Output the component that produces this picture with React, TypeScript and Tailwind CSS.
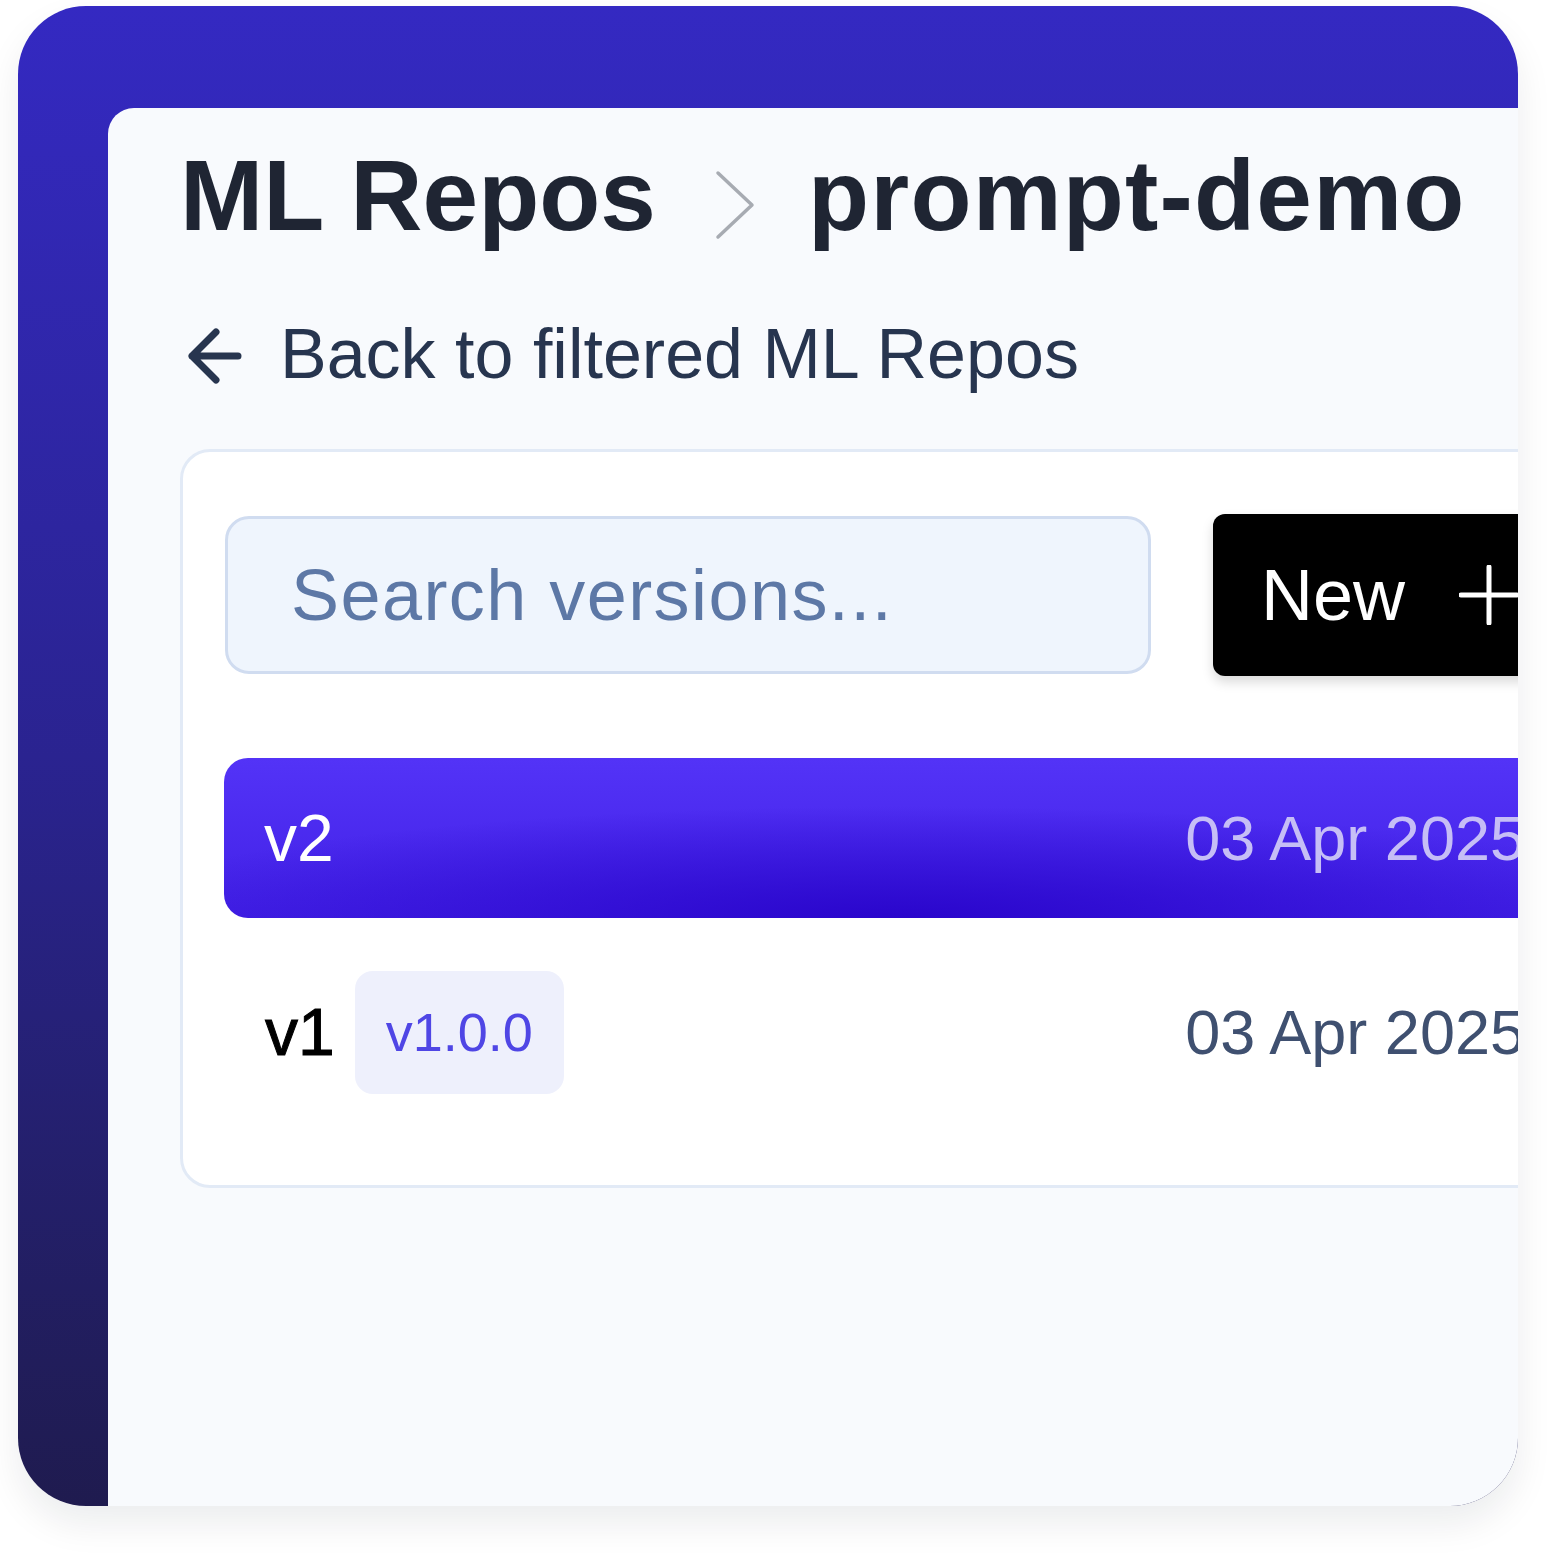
import React from 'react';

const VersionsPanel: React.FC = () => {
    return (
        <div className="min-h-screen bg-white font-['Liberation_Sans',Arial,sans-serif]">
            <div className="pl-[18px] pt-[6px]">
                <div className="w-[1500px] h-[1500px] rounded-[68px] overflow-hidden bg-linear-to-b from-[#3429c2] via-[#2a2390] to-[#1f1b4f] shadow-[0_18px_36px_rgba(15,23,42,0.08)] pl-[90px] pt-[102px]">
                    <div className="h-full w-[1600px] rounded-tl-[26px] bg-[#f8fafd] pl-[72px] pt-[37px]">
                        {/* breadcrumb */}
                        <div className="flex items-start">
                            <h1 className="text-[100px] leading-none font-bold text-[#1f2533] whitespace-nowrap">ML Repos</h1>
                            <svg width="52" height="80" viewBox="0 0 52 80" className="ml-[52px] mt-[20px] shrink-0">
                                <polyline points="10,8 44,40 10,72" fill="none" stroke="#a7abb2" strokeWidth="3.5" strokeLinecap="round" strokeLinejoin="round" />
                            </svg>
                            <h1 className="ml-[48px] text-[100px] leading-none font-bold tracking-[0.012em] text-[#1f2533] whitespace-nowrap">prompt-demo</h1>
                        </div>

                        <div className="mt-[74px] flex items-start">
                            <svg width="68" height="66" viewBox="0 0 68 66" className="mt-[4px] shrink-0">
                                <path d="M36 9 L12 33 L36 57 M12 33 H58" fill="none" stroke="#27354f" strokeWidth="7" strokeLinecap="round" strokeLinejoin="round" />
                            </svg>
                            <span className="ml-[32px] text-[70px] leading-none text-[#27354f] whitespace-nowrap">Back to filtered ML Repos</span>
                        </div>

                        {/* versions card */}
                        <div className="mt-[60px] w-[1440px] rounded-[30px] border-[3px] border-[#e2eaf6] bg-white pt-[62px] px-[42px] pb-[73px]">
                            <div className="flex items-center">
                                <input
                                    placeholder="Search versions..."
                                    className="w-[926px] h-[158px] shrink-0 rounded-[24px] border-[3px] border-[#d0dcf0] bg-[#eff5fd] pl-[63px] text-[72px] tracking-[0.02em] text-[#27354f] placeholder:text-[#5d78a6] outline-none"
                                />
                                <button className="ml-[62px] h-[162px] flex-1 flex items-center rounded-[12px] bg-black pl-[48px] text-white shadow-[0_6px_12px_rgba(0,0,0,0.15)]">
                                    <span className="text-[72px] leading-none">New</span>
                                    <svg width="60" height="60" viewBox="0 0 60 60" className="ml-[54px] shrink-0">
                                        <path d="M2 30 H58 M30 2 V58" stroke="white" strokeWidth="5" strokeLinecap="round" />
                                    </svg>
                                </button>
                            </div>

                            <div className="mt-[82px] -ml-[1px] h-[160px] flex items-center justify-between rounded-[24px] pl-[40px] pr-[50px] bg-[radial-gradient(ellipse_60%_70%_at_50%_100%,#2a06cc_0%,rgba(42,6,204,0)_100%),linear-gradient(to_bottom,#5333f7,#4221e6)]">
                                <span className="text-[66px] leading-none text-white">v2</span>
                                <span className="text-[63px] leading-none text-[#c6bef6]">03 Apr 2025</span>
                            </div>

                            <div className="mt-[34px] h-[160px] flex items-center justify-between pl-[40px] pr-[50px]">
                                <div className="flex items-center">
                                    <span className="text-[66px] leading-none text-black [-webkit-text-stroke:1px_black]">v1</span>
                                    <span className="ml-[20px] h-[123px] flex items-center rounded-[18px] bg-[#eef0fc] px-[31px] text-[54px] leading-none text-[#4f46e5]">v1.0.0</span>
                                </div>
                                <span className="text-[63px] leading-none text-[#3f5070]">03 Apr 2025</span>
                            </div>
                        </div>
                    </div>
                </div>
            </div>
        </div>
    );
};

export default function App() {
    return <VersionsPanel />;
}
